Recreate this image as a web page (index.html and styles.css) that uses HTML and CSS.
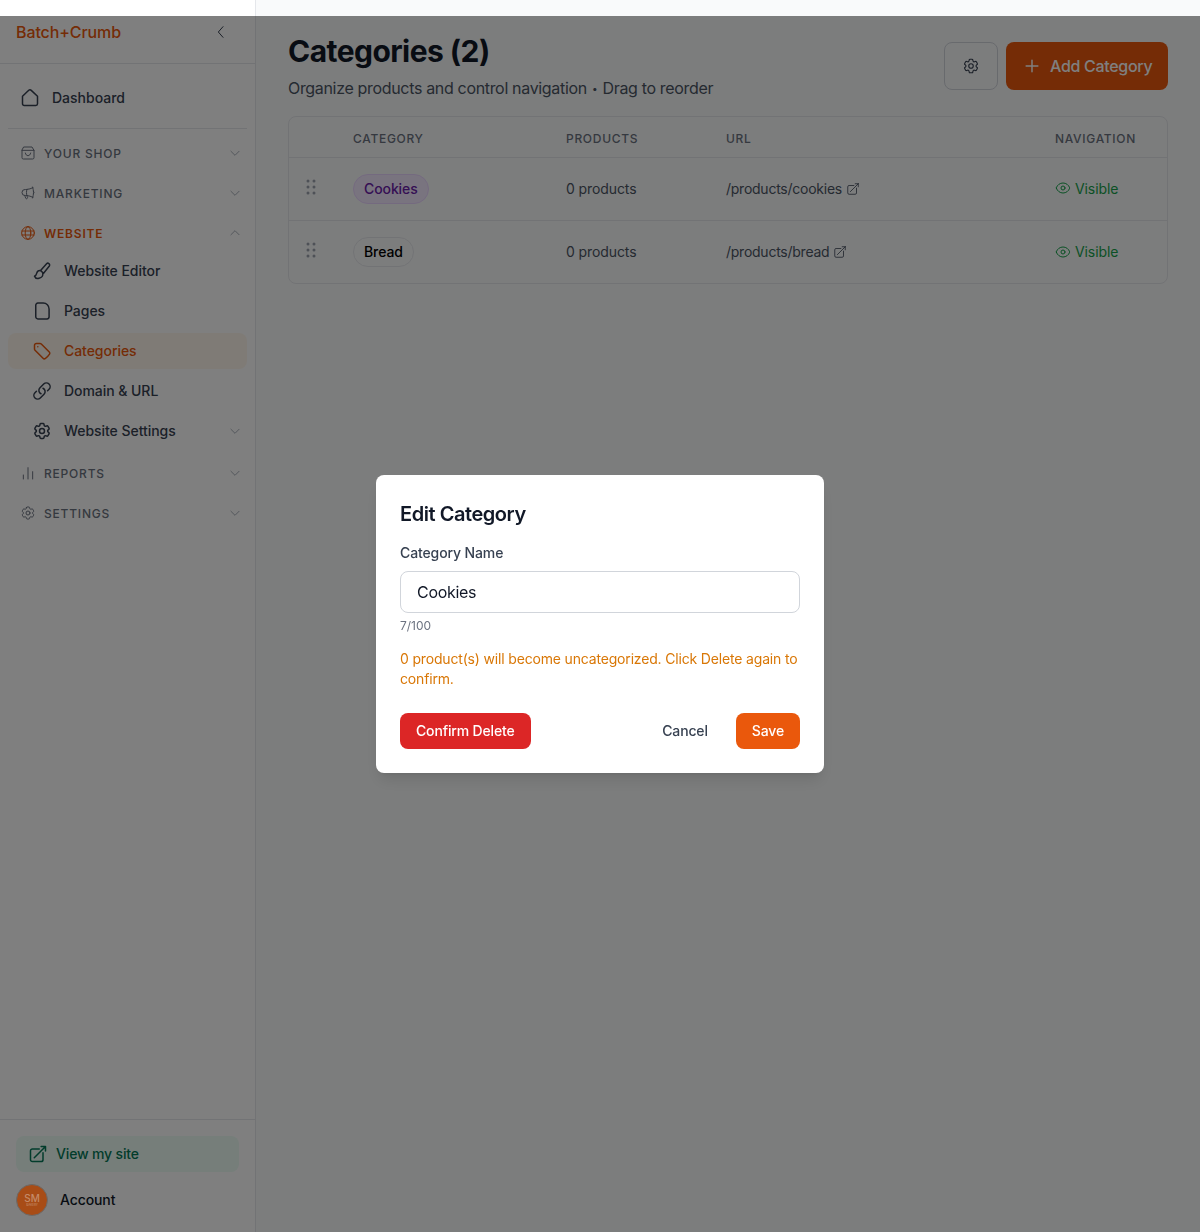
FILE: index.html
```html
<!DOCTYPE html>
<html lang="en">
<head>
  <meta charset="UTF-8" />
  <title>Categories</title>
  <link rel="stylesheet" href="styles.css">
</head>
<body>
  <svg class="sprite" width="0" height="0">
    <defs>
      <symbol id="i-cog" viewBox="0 0 24 24"><path d="M9.594 3.94c.09-.542.56-.94 1.11-.94h2.593c.55 0 1.02.398 1.11.94l.213 1.281c.063.374.313.686.645.87.074.04.147.083.22.127.325.196.72.257 1.075.124l1.217-.456a1.125 1.125 0 0 1 1.37.49l1.296 2.247a1.125 1.125 0 0 1-.26 1.431l-1.003.827c-.293.241-.438.613-.43.992a7.723 7.723 0 0 1 0 .255c-.008.378.137.75.43.991l1.004.827c.424.35.534.955.26 1.43l-1.298 2.247a1.125 1.125 0 0 1-1.369.491l-1.217-.456c-.355-.133-.75-.072-1.076.124a6.47 6.47 0 0 1-.22.128c-.331.183-.581.495-.644.869l-.213 1.281c-.09.543-.56.94-1.11.94h-2.594c-.55 0-1.019-.398-1.11-.94l-.213-1.281c-.062-.374-.312-.686-.644-.87a6.52 6.52 0 0 1-.22-.127c-.325-.196-.72-.257-1.076-.124l-1.217.456a1.125 1.125 0 0 1-1.369-.49l-1.297-2.247a1.125 1.125 0 0 1 .26-1.431l1.004-.827c.292-.24.437-.613.43-.991a6.932 6.932 0 0 1 0-.255c.007-.38-.138-.751-.43-.992l-1.004-.827a1.125 1.125 0 0 1-.26-1.43l1.297-2.247a1.125 1.125 0 0 1 1.37-.491l1.216.456c.356.133.751.072 1.076-.124.072-.044.146-.086.22-.128.332-.183.582-.495.644-.869l.214-1.28Z"/><circle cx="12" cy="12" r="3"/></symbol>
      <symbol id="i-chev" viewBox="0 0 24 24"><path d="M5 9l7 7 7-7"/></symbol>
      <symbol id="i-ext" viewBox="0 0 24 24"><path d="M13.5 6H5.25A2.25 2.25 0 0 0 3 8.25v10.5A2.25 2.25 0 0 0 5.25 21h10.5A2.25 2.25 0 0 0 18 18.75V10.5m-10.5 6L21 3m0 0h-5.25M21 3v5.25"/></symbol>
      <symbol id="i-eye" viewBox="0 0 24 24"><path d="M2.036 12.322a1.012 1.012 0 0 1 0-.639C3.423 7.51 7.36 4.5 12 4.5c4.638 0 8.573 3.007 9.963 7.178.07.207.07.431 0 .639C20.577 16.49 16.64 19.5 12 19.5c-4.638 0-8.573-3.007-9.963-7.178Z"/><circle cx="12" cy="12" r="3"/></symbol>
      <symbol id="i-grip" viewBox="0 0 10 16"><circle cx="2" cy="2" r="1.5"/><circle cx="8" cy="2" r="1.5"/><circle cx="2" cy="8" r="1.5"/><circle cx="8" cy="8" r="1.5"/><circle cx="2" cy="14" r="1.5"/><circle cx="8" cy="14" r="1.5"/></symbol>
    </defs>
  </svg>

  <div class="topstrip">
    <div class="topstrip-side"></div>
    <div class="topstrip-main"></div>
  </div>

  <div class="app">
    <aside class="sidebar">
      <div class="side-head">
        <span class="logo">Batch+Crumb</span>
        <svg class="icon back" viewBox="0 0 24 24"><path d="M15 4l-7 8 7 8"/></svg>
      </div>

      <nav class="side-nav">
        <a class="dash">
          <svg class="icon dash-icon" viewBox="0 0 24 24"><path d="M3 10 10.500 2.800a2.200 2.200 0 0 1 3 0L21 10v9a2 2 0 0 1-2 2H5a2 2 0 0 1-2-2z"/></svg>
          <span class="label">Dashboard</span>
        </a>
        <div class="nav-rule"></div>

        <div class="group">
          <svg class="icon gicon" viewBox="0 0 24 24"><path d="M6 3h12l3 5v11a2 2 0 0 1-2 2H5a2 2 0 0 1-2-2V8zM3 8h18M8 12c.5 2.500 2 4 4 4s3.500-1.500 4-4"/></svg>
          <span>YOUR SHOP</span>
          <svg class="icon chev"><use href="#i-chev"/></svg>
        </div>
        <div class="group">
          <svg class="icon gicon" viewBox="0 0 24 24"><path d="M10.34 15.84c-.688-.06-1.386-.09-2.09-.09H7.5a4.5 4.5 0 1 1 0-9h.75c.704 0 1.402-.03 2.09-.09m0 9.18c.253.962.584 1.892.985 2.783.247.55.06 1.21-.463 1.511l-.657.38c-.551.318-1.26.117-1.527-.461a20.845 20.845 0 0 1-1.44-4.282m3.102.069a18.03 18.03 0 0 1-.59-4.59c0-1.586.205-3.124.59-4.59m0 9.18a23.848 23.848 0 0 1 8.835 2.535M10.34 6.66a23.847 23.847 0 0 0 8.835-2.535m0 0A23.74 23.74 0 0 0 18.795 3m.38 1.125a23.91 23.91 0 0 1 1.014 5.395m-1.014 8.855c-.118.38-.245.754-.38 1.125m.38-1.125a23.91 23.91 0 0 0 1.014-5.395m0-3.46c.495.413.811 1.035.811 1.73 0 .695-.316 1.317-.811 1.73m0-3.46a24.347 24.347 0 0 1 0 3.46"/></svg>
          <span>MARKETING</span>
          <svg class="icon chev"><use href="#i-chev"/></svg>
        </div>
        <div class="group group-on">
          <svg class="icon gicon" viewBox="0 0 24 24"><circle cx="12" cy="12" r="9.500"/><ellipse cx="12" cy="12" rx="4.200" ry="9.500"/><path d="M3 9h18M3 15h18"/></svg>
          <span>WEBSITE</span>
          <svg class="icon chev chev-up"><use href="#i-chev"/></svg>
        </div>

        <div class="subs">
          <a class="sub">
            <svg class="icon sicon" viewBox="0 0 24 24"><path d="M20.300 3.200a2 2 0 0 1 .5 2.800l-6.900 8.700-3.600-3.200 7.200-8.300a2 2 0 0 1 2.800 0zM10.300 11.500c-2.300-.3-4 .8-4.600 3-.4 1.600-1 3-2.700 3.800.8 2.200 3.300 3 5.400 2.500 3.100-.8 5.100-3 4.500-6.100"/></svg>
            <span class="label">Website Editor</span>
          </a>
          <a class="sub">
            <svg class="icon sicon" viewBox="0 0 24 24"><path d="M7 2.500h6.500a7 7 0 0 1 7 7V19a2.500 2.500 0 0 1-2.500 2.500H7A2.500 2.500 0 0 1 4.500 19V5A2.500 2.500 0 0 1 7 2.500z"/></svg>
            <span class="label">Pages</span>
          </a>
          <a class="sub sub-on">
            <svg class="icon sicon" viewBox="0 0 24 24"><path d="M9.568 3H5.250A2.250 2.250 0 0 0 3 5.250v4.318c0 .597.237 1.170.659 1.591l9.581 9.581c.699.699 1.780.872 2.607.330a18.095 18.095 0 0 0 5.223-5.223c.542-.827.369-1.908-.330-2.607L11.160 3.660A2.250 2.250 0 0 0 9.568 3Z"/><path d="M7 7h.01"/></svg>
            <span class="label">Categories</span>
          </a>
          <a class="sub">
            <svg class="icon sicon" viewBox="0 0 24 24"><path d="M13.190 8.688a4.500 4.500 0 0 1 1.242 7.244l-4.500 4.500a4.500 4.500 0 0 1-6.364-6.364l1.757-1.757m13.350-.622 1.757-1.757a4.500 4.500 0 0 0-6.364-6.364l-4.500 4.500a4.500 4.500 0 0 0 1.242 7.244"/></svg>
            <span class="label">Domain &amp; URL</span>
          </a>
          <a class="sub">
            <svg class="icon sicon"><use href="#i-cog"/></svg>
            <span class="label">Website Settings</span>
            <svg class="icon chev"><use href="#i-chev"/></svg>
          </a>
        </div>

        <div class="group">
          <svg class="icon gicon" viewBox="0 0 24 24"><path d="M5 15v6M12 4v17M19 10v11"/></svg>
          <span>REPORTS</span>
          <svg class="icon chev"><use href="#i-chev"/></svg>
        </div>
        <div class="group">
          <svg class="icon gicon"><use href="#i-cog"/></svg>
          <span>SETTINGS</span>
          <svg class="icon chev"><use href="#i-chev"/></svg>
        </div>
      </nav>

      <div class="side-foot">
        <a class="view-site">
          <svg class="icon view-icon"><use href="#i-ext"/></svg>
          <span class="label">View my site</span>
        </a>
        <div class="account">
          <div class="avatar"><span class="avatar-sm">SM</span><span class="avatar-tiny">BAKERY</span></div>
          <span class="label">Account</span>
        </div>
      </div>
    </aside>

    <main class="main">
      <header class="page-head">
        <div>
          <h1>Categories (2)</h1>
          <p>Organize products and control navigation <span class="dot">•</span> Drag to reorder</p>
        </div>
        <div class="head-actions">
          <button class="btn-gear"><svg class="icon"><use href="#i-cog"/></svg></button>
          <button class="btn-add">
            <svg class="icon" viewBox="0 0 24 24"><path d="M12 4v16M4 12h16"/></svg>
            Add Category
          </button>
        </div>
      </header>

      <div class="table-wrap">
        <table>
          <thead>
            <tr>
              <th class="col-drag"></th>
              <th class="col-cat">Category</th>
              <th class="col-prod">Products</th>
              <th class="col-url">URL</th>
              <th>Navigation</th>
            </tr>
          </thead>
          <tbody>
            <tr>
              <td class="drag"><svg class="grip"><use href="#i-grip"/></svg></td>
              <td><span class="pill pill-purple">Cookies</span></td>
              <td class="count">0 products</td>
              <td><span class="url">/products/cookies <svg class="icon"><use href="#i-ext"/></svg></span></td>
              <td><span class="vis"><svg class="icon"><use href="#i-eye"/></svg> Visible</span></td>
            </tr>
            <tr>
              <td class="drag"><svg class="grip"><use href="#i-grip"/></svg></td>
              <td><span class="pill">Bread</span></td>
              <td class="count">0 products</td>
              <td><span class="url">/products/bread <svg class="icon"><use href="#i-ext"/></svg></span></td>
              <td><span class="vis"><svg class="icon"><use href="#i-eye"/></svg> Visible</span></td>
            </tr>
          </tbody>
        </table>
      </div>
    </main>
  </div>

  <div class="overlay">
    <div class="modal">
      <h2>Edit Category</h2>
      <label class="field-label">Category Name</label>
      <div class="field-input">Cookies</div>
      <div class="counter">7/100</div>
      <p class="warn">0 product(s) will become uncategorized. Click Delete again to confirm.</p>
      <div class="modal-actions">
        <button class="btn-delete">Confirm Delete</button>
        <button class="btn-cancel">Cancel</button>
        <button class="btn-save">Save</button>
      </div>
    </div>
  </div>
</body>
</html>
```

FILE: styles.css
```css
* {
  box-sizing: border-box;
}
html, body {
  height: 100%;
}
body {
  margin: 0;
  height: 1232px;
  overflow: hidden;
  font-family: Inter, "Liberation Sans", sans-serif;
  color: #111827;
  background: #f9fafb;
  display: flex;
  flex-direction: column;
}
.sprite {
  position: absolute;
}
.icon {
  fill: none;
  stroke: currentColor;
  stroke-width: 1.5;
  stroke-linecap: round;
  stroke-linejoin: round;
  flex-shrink: 0;
}
.label {
  margin-bottom: 2px;
}

/* top strip above the overlay */
.topstrip {
  display: flex;
  height: 16px;
  flex-shrink: 0;
}
.topstrip-side {
  width: 256px;
  background: #fff;
  border-right: 1px solid #e5e7eb;
}
.topstrip-main {
  flex: 1;
  background: #f9fafb;
}

.app {
  display: flex;
  flex: 1;
  min-height: 0;
}

/* sidebar */
.sidebar {
  width: 256px;
  flex-shrink: 0;
  background: #fff;
  border-right: 1px solid #e5e7eb;
  display: flex;
  flex-direction: column;
}
.side-head {
  height: 48px;
  padding: 0 24px 16px 16px;
  display: flex;
  align-items: center;
  justify-content: space-between;
  border-bottom: 1px solid #e5e7eb;
}
.logo {
  font-size: 16px;
  font-weight: 500;
  letter-spacing: -0.1px;
  color: #ea580c;
}
.back {
  width: 16px;
  height: 16px;
  color: #374151;
  margin-right: 2px;
}
.side-nav {
  flex: 1;
  padding: 16px 8px 0;
  display: flex;
  flex-direction: column;
}
.dash {
  height: 36px;
  display: flex;
  align-items: center;
  gap: 12px;
  padding-left: 12px;
  font-size: 14px;
  font-weight: 450;
  color: #374151;
  margin-bottom: 12px;
}
.dash-icon {
  width: 20px;
  height: 20px;
  stroke-width: 1.8;
}
.nav-rule {
  height: 1px;
  background: #e5e7eb;
  margin-bottom: 8px;
}
.group {
  height: 32px;
  margin-bottom: 8px;
  display: flex;
  align-items: center;
  gap: 8px;
  padding: 0 4px 0 12px;
  font-size: 12px;
  font-weight: 500;
  letter-spacing: 0.8px;
  color: #6b7280;
}
.group span {
  flex: 1;
}
.group-on {
  color: #ea580c;
  font-weight: 600;
  margin-bottom: 4px;
}
.gicon {
  width: 16px;
  height: 16px;
}
.chev {
  width: 14px;
  height: 14px;
  color: #9ca3af;
  margin-right: 1px;
}
.chev-up {
  transform: rotate(180deg);
}
.subs {
  display: flex;
  flex-direction: column;
  gap: 4px;
  margin-bottom: 8px;
}
.sub {
  height: 36px;
  display: flex;
  align-items: center;
  gap: 12px;
  padding-left: 24px;
  padding-right: 4px;
  border-radius: 8px;
  font-size: 14px;
  font-weight: 450;
  letter-spacing: -0.05px;
  color: #374151;
}
.sub .chev {
  margin-left: auto;
}
.sicon {
  width: 20px;
  height: 20px;
  stroke-width: 1.8;
}
.sub-on {
  background: #fff7ed;
  color: #ea580c;
}
.side-foot {
  border-top: 1px solid #e5e7eb;
  padding: 16px;
  height: 113px;
  display: flex;
  flex-direction: column;
  gap: 12px;
}
.view-site {
  height: 36px;
  width: 223px;
  display: flex;
  align-items: center;
  gap: 8px;
  padding-left: 12px;
  border-radius: 8px;
  background: #ecfdf5;
  color: #047857;
  font-size: 14px;
  font-weight: 450;
  letter-spacing: -0.15px;
}
.view-icon {
  width: 20px;
  height: 20px;
  stroke-width: 1.8;
}
.account {
  display: flex;
  align-items: center;
  gap: 12px;
  font-size: 14px;
  font-weight: 450;
  letter-spacing: -0.1px;
  color: #111827;
}
/* sits above the dim layer so its muted colour can be set directly */
.avatar {
  position: relative;
  z-index: 2;
  width: 32px;
  height: 32px;
  border-radius: 50%;
  background: #a84c16;
  border: 1px solid #6b6b6b;
  display: flex;
  flex-direction: column;
  align-items: center;
  justify-content: center;
  color: #c48a68;
}
.avatar-sm {
  font-size: 10px;
  line-height: 10px;
}
.avatar-tiny {
  font-size: 3px;
  line-height: 4px;
}

/* main column */
.main {
  flex: 1;
  min-width: 0;
  padding: 17px 32px 0;
}
.page-head {
  display: flex;
  justify-content: space-between;
  align-items: flex-start;
  margin-bottom: 16px;
}
h1 {
  margin: 0;
  font-size: 30px;
  line-height: 36px;
  font-weight: 700;
  color: #111827;
  letter-spacing: -0.55px;
}
.page-head p {
  margin: 7px 0 0;
  font-size: 16px;
  line-height: 24px;
  color: #4b5563;
  letter-spacing: -0.33px;
}
.dot {
  font-size: 10px;
  line-height: 1;
  vertical-align: 2px;
  margin: 0 1px;
}
.head-actions {
  display: flex;
  gap: 8px;
  padding-top: 9px;
}
button {
  font-family: inherit;
  cursor: pointer;
}
.btn-gear {
  width: 54px;
  height: 48px;
  border: 1px solid #d1d5db;
  border-radius: 8px;
  background: #f9fafb;
  color: #374151;
  display: flex;
  align-items: center;
  justify-content: center;
  padding: 0;
}
.btn-gear .icon {
  width: 18px;
  height: 18px;
}
.btn-add {
  height: 48px;
  width: 162px;
  border: 0;
  border-radius: 8px;
  background: #ea580c;
  color: #fff;
  font-size: 16px;
  font-weight: 450;
  letter-spacing: -0.3px;
  white-space: nowrap;
  display: flex;
  align-items: center;
  gap: 10px;
  padding: 0 0 0 18px;
}
.btn-add .icon {
  width: 16px;
  height: 16px;
  stroke-width: 2;
  transform: scale(1.1);
}

/* table */
.table-wrap {
  background: #f9fafb;
  border: 1px solid #e5e7eb;
  border-radius: 8px;
  overflow: hidden;
}
table {
  width: 100%;
  border-collapse: collapse;
  table-layout: fixed;
}
th {
  height: 40px;
  padding: 3px 0 0;
  text-align: left;
  font-size: 12px;
  font-weight: 450;
  letter-spacing: 0.7px;
  text-transform: uppercase;
  color: #6b7280;
  border-bottom: 1px solid #e5e7eb;
}
.col-drag { width: 64px; }
.col-cat { width: 213px; }
.col-prod { width: 160px; }
.col-url { width: 329px; }
td {
  height: 63px;
  padding: 0;
  font-size: 14px;
  color: #4b5563;
  border-bottom: 1px solid #e5e7eb;
}
tr:last-child td {
  border-bottom: 0;
}
.count {
  letter-spacing: -0.1px;
}
.drag {
  padding-left: 17px;
  padding-bottom: 4px;
  color: #9ca3af;
}
.grip {
  display: block;
  width: 10px;
  height: 16px;
  fill: #9ca3af;
}
.pill {
  display: inline-flex;
  align-items: center;
  height: 30px;
  padding: 0 10px;
  border: 1px solid #e5e7eb;
  border-radius: 999px;
  font-weight: 450;
  letter-spacing: -0.1px;
  color: #000;
}
.pill-purple {
  background: #f3e8ff;
  border-color: #e9d5ff;
  color: #6b21a8;
}
.url {
  display: inline-flex;
  align-items: center;
  gap: 4px;
  letter-spacing: -0.25px;
}
.url .icon {
  width: 14px;
  height: 14px;
}
.vis {
  display: inline-flex;
  align-items: center;
  gap: 4px;
  padding-top: 2px;
  letter-spacing: -0.1px;
  color: #16a34a;
}
.vis .icon {
  width: 16px;
  height: 16px;
}

/* dialog */
.overlay {
  position: absolute;
  left: 0;
  right: 0;
  top: 16px;
  height: 1216px;
  background: rgba(0, 0, 0, 0.5);
  backdrop-filter: blur(0.5px);
  display: flex;
  justify-content: center;
  padding-top: 459px;
}
.modal {
  width: 448px;
  height: 298px;
  background: #fff;
  border-radius: 8px;
  padding: 24px;
  box-shadow: 0 10px 15px -3px rgba(0, 0, 0, 0.1), 0 4px 6px -4px rgba(0, 0, 0, 0.1);
}
h2 {
  margin: 0 0 14px;
  font-size: 20px;
  line-height: 30px;
  font-weight: 600;
  color: #111827;
  letter-spacing: -0.45px;
}
.field-label {
  display: block;
  font-size: 14px;
  line-height: 20px;
  font-weight: 450;
  color: #374151;
  letter-spacing: -0.12px;
  margin-bottom: 8px;
}
.field-input {
  height: 42px;
  border: 1px solid #d1d5db;
  border-radius: 8px;
  padding: 0 16px;
  display: flex;
  align-items: center;
  font-size: 16px;
  letter-spacing: -0.3px;
  color: #111827;
}
.counter {
  margin-top: 4px;
  font-size: 12px;
  line-height: 18px;
  color: #6b7280;
}
.warn {
  margin: 14px 0 0;
  font-size: 14px;
  line-height: 20px;
  letter-spacing: -0.17px;
  color: #d97706;
}
.modal-actions {
  display: flex;
  align-items: center;
  margin-top: 24px;
}
.modal-actions button {
  height: 36px;
  border: 0;
  border-radius: 8px;
  font-size: 14px;
  font-weight: 450;
  letter-spacing: -0.15px;
  padding: 0 16px 2px;
}
.btn-delete {
  background: #dc2626;
  color: #fff;
  margin-right: auto;
}
.btn-cancel {
  background: none;
  color: #374151;
  margin-right: 12px;
}
.btn-save {
  background: #ea580c;
  color: #fff;
}
```
